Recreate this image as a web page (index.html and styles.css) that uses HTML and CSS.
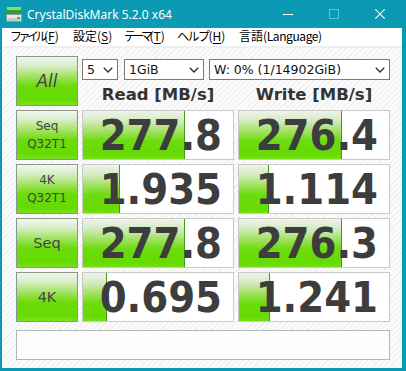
FILE: index.html
```html
<!DOCTYPE html>
<html lang="ja">
<head>
<meta charset="utf-8">
<title>CrystalDiskMark 5.2.0 x64</title>
<link rel="stylesheet" href="styles.css">
</head>
<body>
<div class="window">
  <div class="titlebar">
    <svg class="appicon" width="16" height="15" viewBox="0 0 16 15">
      <rect x="1" y="0" width="14" height="3" fill="#8ede5c"/>
      <rect x="0" y="3" width="16" height="3" fill="#2f9f45"/>
      <rect x="0.5" y="7.5" width="15" height="7" rx="1" fill="#e4e8e8" stroke="#8f9c9c"/>
      <rect x="1.5" y="11" width="13" height="3" fill="#c3caca"/>
      <rect x="11" y="10" width="3" height="2" fill="#35c23a"/>
    </svg>
    <span class="title">CrystalDiskMark 5.2.0 x64</span>
    <div class="caption">
      <div class="cbtn"><svg width="10" height="10" viewBox="0 0 10 10"><line x1="0" y1="5.5" x2="10" y2="5.5" stroke="#ffffff" stroke-width="1"/></svg></div>
      <div class="cbtn"><svg width="10" height="10" viewBox="0 0 10 10"><rect x="0.5" y="0.5" width="9" height="9" fill="none" stroke="#5cc2d4" stroke-width="1"/></svg></div>
      <div class="cbtn"><svg width="10" height="10" viewBox="0 0 10 10"><path d="M0.3 0.3 L9.7 9.7 M9.7 0.3 L0.3 9.7" stroke="#ffffff" stroke-width="1.1"/></svg></div>
    </div>
  </div>
  <div class="frame">
    <div class="menubar">
      <span class="mi m1"><span class="kana">ファイル</span>(<u>F</u>)</span>
      <span class="mi m2">設定(<u>S</u>)</span>
      <span class="mi m3"><span class="kana">テーマ</span>(<u>T</u>)</span>
      <span class="mi m4"><span class="kana k2">ヘルプ</span>(<u>H</u>)</span>
      <span class="mi">言語<span class="latin">(Language)</span></span>
    </div>
    <div class="client">
      <div class="grid">
        <div class="btn all">All</div>
        <div class="top">
          <div class="selects">
            <div class="sel s1"><span>5</span><svg width="10" height="6" viewBox="0 0 10 6"><polyline points="0.8,0.8 5,5 9.2,0.8" fill="none" stroke="#2b2b2b" stroke-width="1.3"/></svg></div>
            <div class="sel s2"><span>1GiB</span><svg width="10" height="6" viewBox="0 0 10 6"><polyline points="0.8,0.8 5,5 9.2,0.8" fill="none" stroke="#2b2b2b" stroke-width="1.3"/></svg></div>
            <div class="sel s3"><span>W: 0% (1/14902GiB)</span><svg width="10" height="6" viewBox="0 0 10 6"><polyline points="0.8,0.8 5,5 9.2,0.8" fill="none" stroke="#2b2b2b" stroke-width="1.3"/></svg></div>
          </div>
          <div class="head">Read [MB/s]</div>
          <div class="head">Write [MB/s]</div>
        </div>

        <div class="btn two"><span>Seq</span><span>Q32T1</span></div>
        <div class="res"><div class="bar" style="width:102px"></div><span class="val">277.8</span></div>
        <div class="res"><div class="bar" style="width:103px"></div><span class="val">276.4</span></div>

        <div class="btn two"><span>4K</span><span>Q32T1</span></div>
        <div class="res"><div class="bar" style="width:37px"></div><span class="val">1.935</span></div>
        <div class="res"><div class="bar" style="width:30px"></div><span class="val">1.114</span></div>

        <div class="btn one">Seq</div>
        <div class="res"><div class="bar" style="width:102px"></div><span class="val">277.8</span></div>
        <div class="res"><div class="bar" style="width:103px"></div><span class="val">276.3</span></div>

        <div class="btn one">4K</div>
        <div class="res"><div class="bar" style="width:24px"></div><span class="val">0.695</span></div>
        <div class="res"><div class="bar" style="width:31px"></div><span class="val">1.241</span></div>
      </div>
      <div class="status"></div>
    </div>
  </div>
</div>
</body>
</html>
```

FILE: styles.css
```css
html, body {
  margin: 0;
  padding: 0;
}
body {
  width: 406px;
  height: 371px;
  overflow: hidden;
  background: #0099b4;
}
.window {
  width: 406px;
  height: 371px;
  display: flex;
  flex-direction: column;
  background: #0a9ab3;
}
.titlebar {
  height: 28px;
  display: flex;
  align-items: center;
  padding-left: 6px;
  color: #ffffff;
}
.appicon {
  display: block;
  margin-top: 1px;
}
.title {
  margin-left: 5px;
  font-family: "Noto Sans", sans-serif;
  font-size: 12px;
  line-height: 16px;
  margin-top: 1px;
}
.caption {
  margin-left: auto;
  display: flex;
  padding-right: 3px;
  height: 28px;
}
.cbtn {
  width: 46px;
  height: 28px;
  display: flex;
  align-items: center;
  justify-content: center;
}
.cbtn svg {
  display: block;
}
.frame {
  flex: 1;
  margin: 0 4px 3px 2px;
  display: flex;
  flex-direction: column;
  background: #ffffff;
}
.menubar {
  height: 18px;
  display: flex;
  align-items: center;
  background: #ffffff;
  border-bottom: 2px solid #f0f0f0;
  font-family: "Noto Sans CJK JP", sans-serif;
  font-size: 12px;
  color: #000000;
}
.mi {
  flex: none;
  box-sizing: border-box;
  padding-left: 8px;
  line-height: 16px;
  margin-top: -2px;
  white-space: nowrap;
}
.m1 { width: 63px; }
.m2 { width: 51px; }
.m3 { width: 53px; }
.m4 { width: 62px; }
.mi .kana {
  letter-spacing: -3.5px;
}
.mi .kana.k2 {
  letter-spacing: -1.5px;
}
.mi .latin {
  letter-spacing: -0.4px;
}
.mi u {
  text-decoration-thickness: 1px;
  text-underline-offset: 2px;
}
.client {
  flex: 1;
  padding: 8px 12px 8px 14px;
  background-color: #fbfbfb;
  background-image: repeating-linear-gradient(135deg, #fbfbfb 0px, #fbfbfb 3px, #eeeeee 3px, #eeeeee 4px);
}
.grid {
  display: grid;
  grid-template-columns: 62px 152px 152px;
  grid-template-rows: repeat(5, 50px);
  gap: 4px;
}
.btn {
  box-sizing: border-box;
  border: 1px solid #8a978a;
  background: linear-gradient(to bottom, #f2f5f0 0%, #d8eec8 18%, #9ee25a 42%, #6cdc0c 60%, #66da00 88%, #78e020 100%);
  display: flex;
  flex-direction: column;
  align-items: center;
  justify-content: center;
  font-family: "DejaVu Sans", sans-serif;
  color: #454545;
}
.btn.all {
  font-size: 17px;
  font-style: italic;
}
.btn.two {
  font-size: 12px;
  line-height: 18px;
  padding-bottom: 1px;
}
.btn.one {
  font-size: 14.5px;
}
.top {
  grid-column: 2 / span 2;
  display: grid;
  grid-template-columns: 152px 152px;
  grid-template-rows: 21px 1fr;
  column-gap: 4px;
  padding-top: 3px;
}
.selects {
  grid-column: 1 / span 2;
  display: flex;
  height: 21px;
}
.sel {
  box-sizing: border-box;
  height: 21px;
  border: 1px solid #7a7a7a;
  background: #ffffff;
  display: flex;
  align-items: center;
  justify-content: space-between;
  padding: 0 4px 0 4px;
  font-family: "DejaVu Sans", sans-serif;
  font-size: 12.5px;
  color: #111111;
}
.sel svg {
  display: block;
}
.s1 { width: 36px; }
.s2 { width: 80px; margin-left: 6px; }
.s3 { width: 181px; margin-left: 5px; padding-right: 4px; }
.head {
  display: flex;
  align-items: center;
  justify-content: center;
  font-family: "DejaVu Sans", sans-serif;
  font-weight: bold;
  font-size: 16.5px;
  color: #333333;
  padding-top: 2px;
}
.res {
  position: relative;
  box-sizing: border-box;
  border: 1px solid #c9c9c9;
  background: #ffffff;
  display: flex;
  align-items: center;
  justify-content: flex-end;
  padding-right: 11px;
  overflow: hidden;
}
.bar {
  position: absolute;
  left: 0;
  top: 0;
  bottom: 0;
  box-sizing: border-box;
  border-right: 1px solid #3f9a1e;
  background: linear-gradient(to bottom, #f0f2ee 0%, #d4ecc2 20%, #9ce056 45%, #6cdc10 62%, #66da00 90%, #74df18 100%);
}
.val {
  position: relative;
  font-family: "DejaVu Sans Condensed", "DejaVu Sans", sans-serif;
  font-stretch: condensed;
  font-weight: bold;
  font-size: 43px;
  line-height: 1;
  color: #3d3d3d;
  padding-top: 1px;
}
.status {
  margin-top: 8px;
  height: 30px;
  box-sizing: border-box;
  border: 1px solid #b4b4b4;
  background: #fdfdfd;
}
```
